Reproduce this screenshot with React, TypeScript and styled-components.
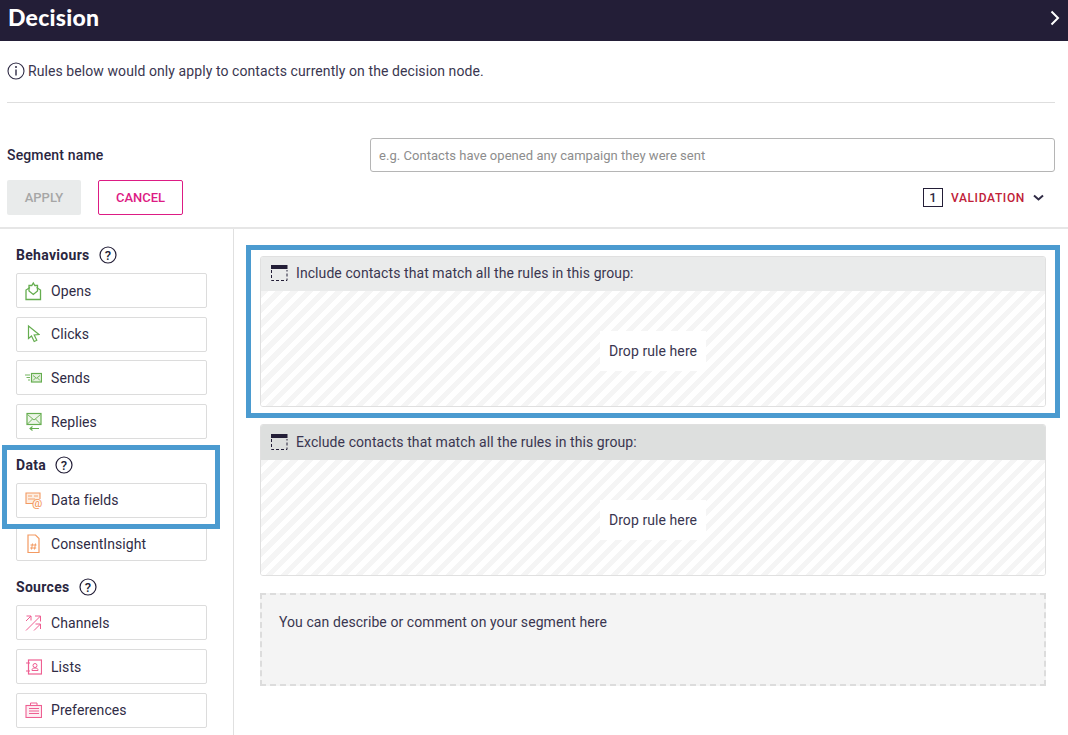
import React from "react";
import styled, { createGlobalStyle } from "styled-components";

const Global = createGlobalStyle`
  html, body { margin: 0; padding: 0; background: #fff; }
  body { font-family: Roboto, "Liberation Sans", sans-serif; color: #2f2b45; overflow: hidden; letter-spacing: 0.08px; }
  * { box-sizing: border-box; }
`;

const Page = styled.div`
  width: 1068px;
  height: 735px;
  display: flex;
  flex-direction: column;
  overflow: hidden;
`;
const Header = styled.header`
  height: 41px;
  flex: none;
  background: #231e37;
  color: #fff;
  display: flex;
  align-items: center;
  justify-content: space-between;
  padding: 0 8px;
`;
const Title = styled.h1`
  margin: 0;
  font: 900 23px/1 Lato, sans-serif;
  color: #fff;
  position: relative;
  top: -3px;
  letter-spacing: 0.25px;
`;
const ChevronBtn = styled.span`
  display: flex;
  position: relative;
  top: -3px;
`;
const InfoSection = styled.div`
  margin: 0 13px 0 7px;
  height: 62px;
  border-bottom: 1px solid #dedede;
  display: flex;
  align-items: center;
  gap: 3px;
  font-size: 14px;
  color: #3a3650;
  padding-bottom: 2px;
`;
const FormSection = styled.div`
  height: 126px;
  flex: none;
  border-bottom: 2px solid #e6e6e6;
  padding: 35px 13px 0 7px;
  display: flex;
  flex-direction: column;
  gap: 8px;
`;
const FormRow = styled.div`
  display: flex;
  align-items: center;
  justify-content: space-between;
`;
const FieldLabel = styled.label`
  font-size: 14px;
  font-weight: 500;
  letter-spacing: 0.15px;
  color: #2a2640;
`;
const NameInput = styled.input`
  width: 685px;
  height: 34px;
  border: 1px solid #b5b5b5;
  border-radius: 3px;
  padding: 0 8px;
  font: 400 13px Roboto, sans-serif;
  letter-spacing: 0.04px;
  outline: none;
  &::placeholder { color: #8d8d8d; opacity: 1; }
`;
const Buttons = styled.div`
  display: flex;
  gap: 17px;
`;
const ActionButton = styled.button<{ $primary?: boolean }>`
  width: ${(p) => (p.$primary ? "74px" : "85px")};
  height: 35px;
  border-radius: 2px;
  font: 500 13px Roboto, sans-serif;
  background: ${(p) => (p.$primary ? "#e9ebeb" : "#fff")};
  color: ${(p) => (p.$primary ? "#a6a6a6" : "#dd1b84")};
  border: ${(p) => (p.$primary ? "none" : "1px solid #dd1b84")};
`;
const Validation = styled.div`
  display: flex;
  align-items: center;
  margin-right: 11px;
`;
const CountBox = styled.span`
  width: 20px;
  height: 19px;
  border: 1px solid #231e37;
  font-size: 13px;
  font-weight: 500;
  display: flex;
  align-items: center;
  justify-content: center;
  color: #2f2b45;
  margin-right: 8px;
`;
const ValidationText = styled.span`
  font-size: 12px;
  font-weight: 500;
  letter-spacing: 0.65px;
  color: #c02138;
  margin-right: 8px;
`;
const Body = styled.div`
  flex: 1;
  display: flex;
  min-height: 0;
`;
const Sidebar = styled.aside`
  width: 234px;
  flex: none;
  border-right: 1px solid #e0e0e0;
  padding: 17px 26px 0 16px;
`;
const SectionHead = styled.div`
  display: flex;
  align-items: center;
  gap: 9px;
  height: 18px;
  margin-bottom: 9px;
  font-size: 14px;
  font-weight: 700;
  letter-spacing: 0.3px;
  color: #2a2640;
`;
const Section = styled.section<{ $after: number }>`
  position: relative;
  margin-bottom: ${(p) => p.$after}px;
`;
const Tile = styled.div`
  height: 35px;
  margin-bottom: 8.7px;
  border: 1px solid #dcdcdc;
  border-radius: 2px;
  display: flex;
  align-items: center;
  padding-left: 7px;
  gap: 8px;
  font-size: 14px;
  color: #2f2b45;
  background: #fff;
  &:last-child { margin-bottom: 0; }
`;
const IconSlot = styled.span`
  width: 19px;
  height: 20px;
  display: flex;
  align-items: center;
  justify-content: center;
  flex: none;
`;
const Highlight = styled.div`
  position: absolute;
  border: 5px solid #4b9bd0;
  pointer-events: none;
`;
const DataHighlight = styled(Highlight)`
  left: -14px;
  top: -11px;
  width: 218px;
  height: 84px;
`;
const Content = styled.main`
  flex: 1;
  padding: 27px 22px 0 26px;
  display: flex;
  flex-direction: column;
  gap: 17px;
`;
const Group = styled.div`
  position: relative;
`;
const RuleGroup = styled.div`
  border: 1px solid #e0e0e0;
  border-radius: 3px;
  display: flex;
  flex-direction: column;
  overflow: hidden;
`;
const GroupHead = styled.div<{ $dark?: boolean }>`
  height: ${(p) => (p.$dark ? "35px" : "34px")};
  margin: 0 -1px;
  padding: 0 0 2px 11px;
  background: ${(p) => (p.$dark ? "#dddfde" : "#eaebeb")};
  display: flex;
  align-items: center;
  gap: 8px;
  font-size: 14px;
  color: #3a3650;
`;
const DropZone = styled.div<{ $h: number }>`
  height: ${(p) => p.$h}px;
  padding-top: 5px;
  background: repeating-linear-gradient(135deg, #f5f5f5 0 5px, #fff 5px 10.6px);
  display: flex;
  align-items: center;
  justify-content: center;
`;
const DropLabel = styled.div`
  width: 106px;
  height: 40px;
  background: #fff;
  font-size: 14px;
  color: #3a3650;
  display: flex;
  align-items: center;
  justify-content: center;
`;
const IncludeHighlight = styled(Highlight)`
  left: -14px;
  top: -11px;
  width: 814px;
  height: 173px;
`;
const Note = styled.div`
  height: 93px;
  background: #f4f4f4;
  border: 2px dashed #dcdcdc;
  padding: 19px 17px;
  font-size: 14px;
  color: #3a3650;
`;

type P = { c: string };
const Svg: React.FC<{ w?: number; h?: number; children: React.ReactNode; c?: string }> = ({ w = 19, h = 20, children, c }) => (
  <svg width={w} height={h} viewBox={`0 0 ${w} ${h}`} fill="none" stroke={c} strokeWidth="1">
    {children}
  </svg>
);
const Opens = ({ c }: P) => (
  <Svg c={c} w={17} h={20}>
    <path d="M5 6.500 1 9v9.500h14.500V9l-4-2.500" strokeWidth="1.300" />
    <path d="M4 10V4.500h2.800L8.300 2l1.500 2.500H12.500V10L8.300 13.500z" strokeWidth="1.300" />
  </Svg>
);
const Clicks = ({ c }: P) => (
  <Svg c={c} w={13} h={20}>
    <path d="M1.500 2v12.500l3-2.500 2.700 5.500 2.600-1.300L7.200 11l4.800-.5z" strokeWidth="1.200" />
  </Svg>
);
const Sends = ({ c }: P) => (
  <Svg c={c} w={17} h={12}>
    <rect x="6.500" y="1.500" width="10" height="8.500" strokeWidth="1.200" fill="#e6f1e0" />
    <path d="M8 3.500l3.500 2.700L15 3.500M8 8.500l2.500-2.500M15 8.500 12.500 6" strokeWidth="0.900" />
    <path d="M0 3h5M1.500 5.500h3.500M3 8h2" strokeWidth="0.900" />
  </Svg>
);
const Replies = ({ c }: P) => (
  <Svg c={c} w={16} h={20}>
    <rect x="1" y="1.500" width="14" height="11" strokeWidth="1.200" fill="#edf5e8" />
    <path d="M1.500 2.500 8 8l6.500-5.500M1.500 12l5-5M14.500 12l-5-5" strokeWidth="0.900" />
    <path d="M13 16.500H4M6.500 14.500l-2.500 2 2.500 2" strokeWidth="1.100" />
  </Svg>
);
const DataFields = ({ c }: P) => (
  <Svg c={c} w={18} h={17}>
    <path d="M8 11.500H1V1h14v6" strokeWidth="1.100" fill="#fdeee2" />
    <path d="M3 4h4M3 7h7M9 4h4" strokeWidth="0.900" />
    <text x="12.300" y="15.300" textAnchor="middle" fontFamily="Roboto, sans-serif" fontSize="11.500" fontWeight="500" fill={c} stroke="none">@</text>
  </Svg>
);
const Consent = ({ c }: P) => (
  <Svg c={c} w={13} h={20}>
    <path d="M1 1h7.500L12 4.500V18.500H1z" strokeWidth="1.200" />
    <path d="M4.500 15.500l1-6M7.500 15.500l1-6M3.500 11h6M3.200 14h6" strokeWidth="1" />
  </Svg>
);
const Channels = ({ c }: P) => (
  <Svg c={c} w={17} h={16}>
    <path d="M1 15.500 15.500 1M10 1h5.500v5.500" strokeWidth="1" />
    <path d="M1 6 6 1M1.500 1H6v4.500" strokeWidth="1" />
    <path d="M9 15.500l6.500-6.500M10.500 9h5v5" strokeWidth="1" />
  </Svg>
);
const Lists = ({ c }: P) => (
  <Svg c={c} w={16} h={16}>
    <rect x="2.500" y="1" width="13" height="14" strokeWidth="1.200" />
    <path d="M0 4h4M0 12h4" strokeWidth="1" />
    <path d="M6 11.500c0-2 1-2.500 3-2.500s3 .5 3 2.500z" strokeWidth="1" />
    <circle cx="9" cy="6.500" r="2" strokeWidth="1" />
  </Svg>
);
const Prefs = ({ c }: P) => (
  <Svg c={c} w={17} h={16}>
    <rect x="1" y="3.500" width="15.500" height="12" strokeWidth="1.100" fill="#fdeef3" />
    <path d="M5.500 3.500V1h6.500v2.500" strokeWidth="1" />
    <path d="M4 6.500h10M4 9h10M4 11.500h10" strokeWidth="1" />
  </Svg>
);

const GREEN = "#65ad4f";
const ORANGE = "#f39a62";
const PINK = "#ee5f92";

const Help = () => (
  <svg width="18" height="18" viewBox="0 0 18 18" fill="none">
    <circle cx="9" cy="9" r="8" stroke="#231e37" strokeWidth="1.200" />
    <text x="9" y="13.500" textAnchor="middle" fontFamily="Roboto, sans-serif" fontWeight="500" fontSize="13" fill="#231e37" stroke="none">?</text>
  </svg>
);
const Info = () => (
  <svg width="18" height="18" viewBox="0 0 18 18" fill="none">
    <circle cx="9" cy="9" r="8" stroke="#2f2b45" strokeWidth="1.100" />
    <path d="M9 7.500v6" stroke="#2f2b45" strokeWidth="1.400" />
    <circle cx="9" cy="5" r="1" fill="#2f2b45" />
  </svg>
);
const GroupIcon = () => (
  <svg width="17" height="16" viewBox="0 0 17 16" fill="none">
    <rect x="0.500" y="0.500" width="15.500" height="3" fill="#231e37" stroke="#231e37" />
    <path d="M.5 5v10.500H16V5" stroke="#231e37" strokeWidth="1" strokeDasharray="3 2" />
  </svg>
);

const items = {
  behaviours: [
    ["Opens", <Opens c={GREEN} />],
    ["Clicks", <Clicks c={GREEN} />],
    ["Sends", <Sends c={GREEN} />],
    ["Replies", <Replies c={GREEN} />],
  ],
  data: [
    ["Data fields", <DataFields c={ORANGE} />],
    ["ConsentInsight", <Consent c={ORANGE} />],
  ],
  sources: [
    ["Channels", <Channels c={PINK} />],
    ["Lists", <Lists c={PINK} />],
    ["Preferences", <Prefs c={PINK} />],
  ],
} as const;

const Tiles = ({ list }: { list: readonly (readonly [string, React.ReactNode])[] }) => (
  <>
    {list.map(([label, icon]) => (
      <Tile key={label}>
        <IconSlot>{icon}</IconSlot>
        {label}
      </Tile>
    ))}
  </>
);

export default function App() {
  return (
    <Page>
      <Global />
      <Header>
        <Title>Decision</Title>
        <ChevronBtn>
          <svg width="10" height="16" viewBox="0 0 10 16" fill="none">
            <path d="M1.500 1.500 8 8l-6.500 6.500" stroke="#fff" strokeWidth="2" />
          </svg>
        </ChevronBtn>
      </Header>
      <InfoSection>
        <Info />
        Rules below would only apply to contacts currently on the decision node.
      </InfoSection>
      <FormSection>
        <FormRow>
          <FieldLabel>Segment name</FieldLabel>
          <NameInput placeholder="e.g. Contacts have opened any campaign they were sent" />
        </FormRow>
        <FormRow>
          <Buttons>
            <ActionButton $primary>APPLY</ActionButton>
            <ActionButton>CANCEL</ActionButton>
          </Buttons>
          <Validation>
            <CountBox>1</CountBox>
            <ValidationText>VALIDATION</ValidationText>
            <svg width="11" height="8" viewBox="0 0 11 8" fill="none">
              <path d="M1 1.500l4.500 4 4.500-4" stroke="#2f2b45" strokeWidth="2" />
            </svg>
          </Validation>
        </FormRow>
      </FormSection>
      <Body>
        <Sidebar>
          <Section $after={16.6}>
            <SectionHead>Behaviours <Help /></SectionHead>
            <Tiles list={items.behaviours} />
          </Section>
          <Section $after={17}>
            <SectionHead>Data <Help /></SectionHead>
            <Tiles list={items.data} />
            <DataHighlight />
          </Section>
          <Section $after={0}>
            <SectionHead>Sources <Help /></SectionHead>
            <Tiles list={items.sources} />
          </Section>
        </Sidebar>
        <Content>
          <Group>
            <RuleGroup>
              <GroupHead><GroupIcon />Include contacts that match all the rules in this group:</GroupHead>
              <DropZone $h={115}><DropLabel>Drop rule here</DropLabel></DropZone>
            </RuleGroup>
            <IncludeHighlight />
          </Group>
          <Group>
            <RuleGroup>
              <GroupHead $dark><GroupIcon />Exclude contacts that match all the rules in this group:</GroupHead>
              <DropZone $h={115}><DropLabel>Drop rule here</DropLabel></DropZone>
            </RuleGroup>
          </Group>
          <Note>You can describe or comment on your segment here</Note>
        </Content>
      </Body>
    </Page>
  );
}
